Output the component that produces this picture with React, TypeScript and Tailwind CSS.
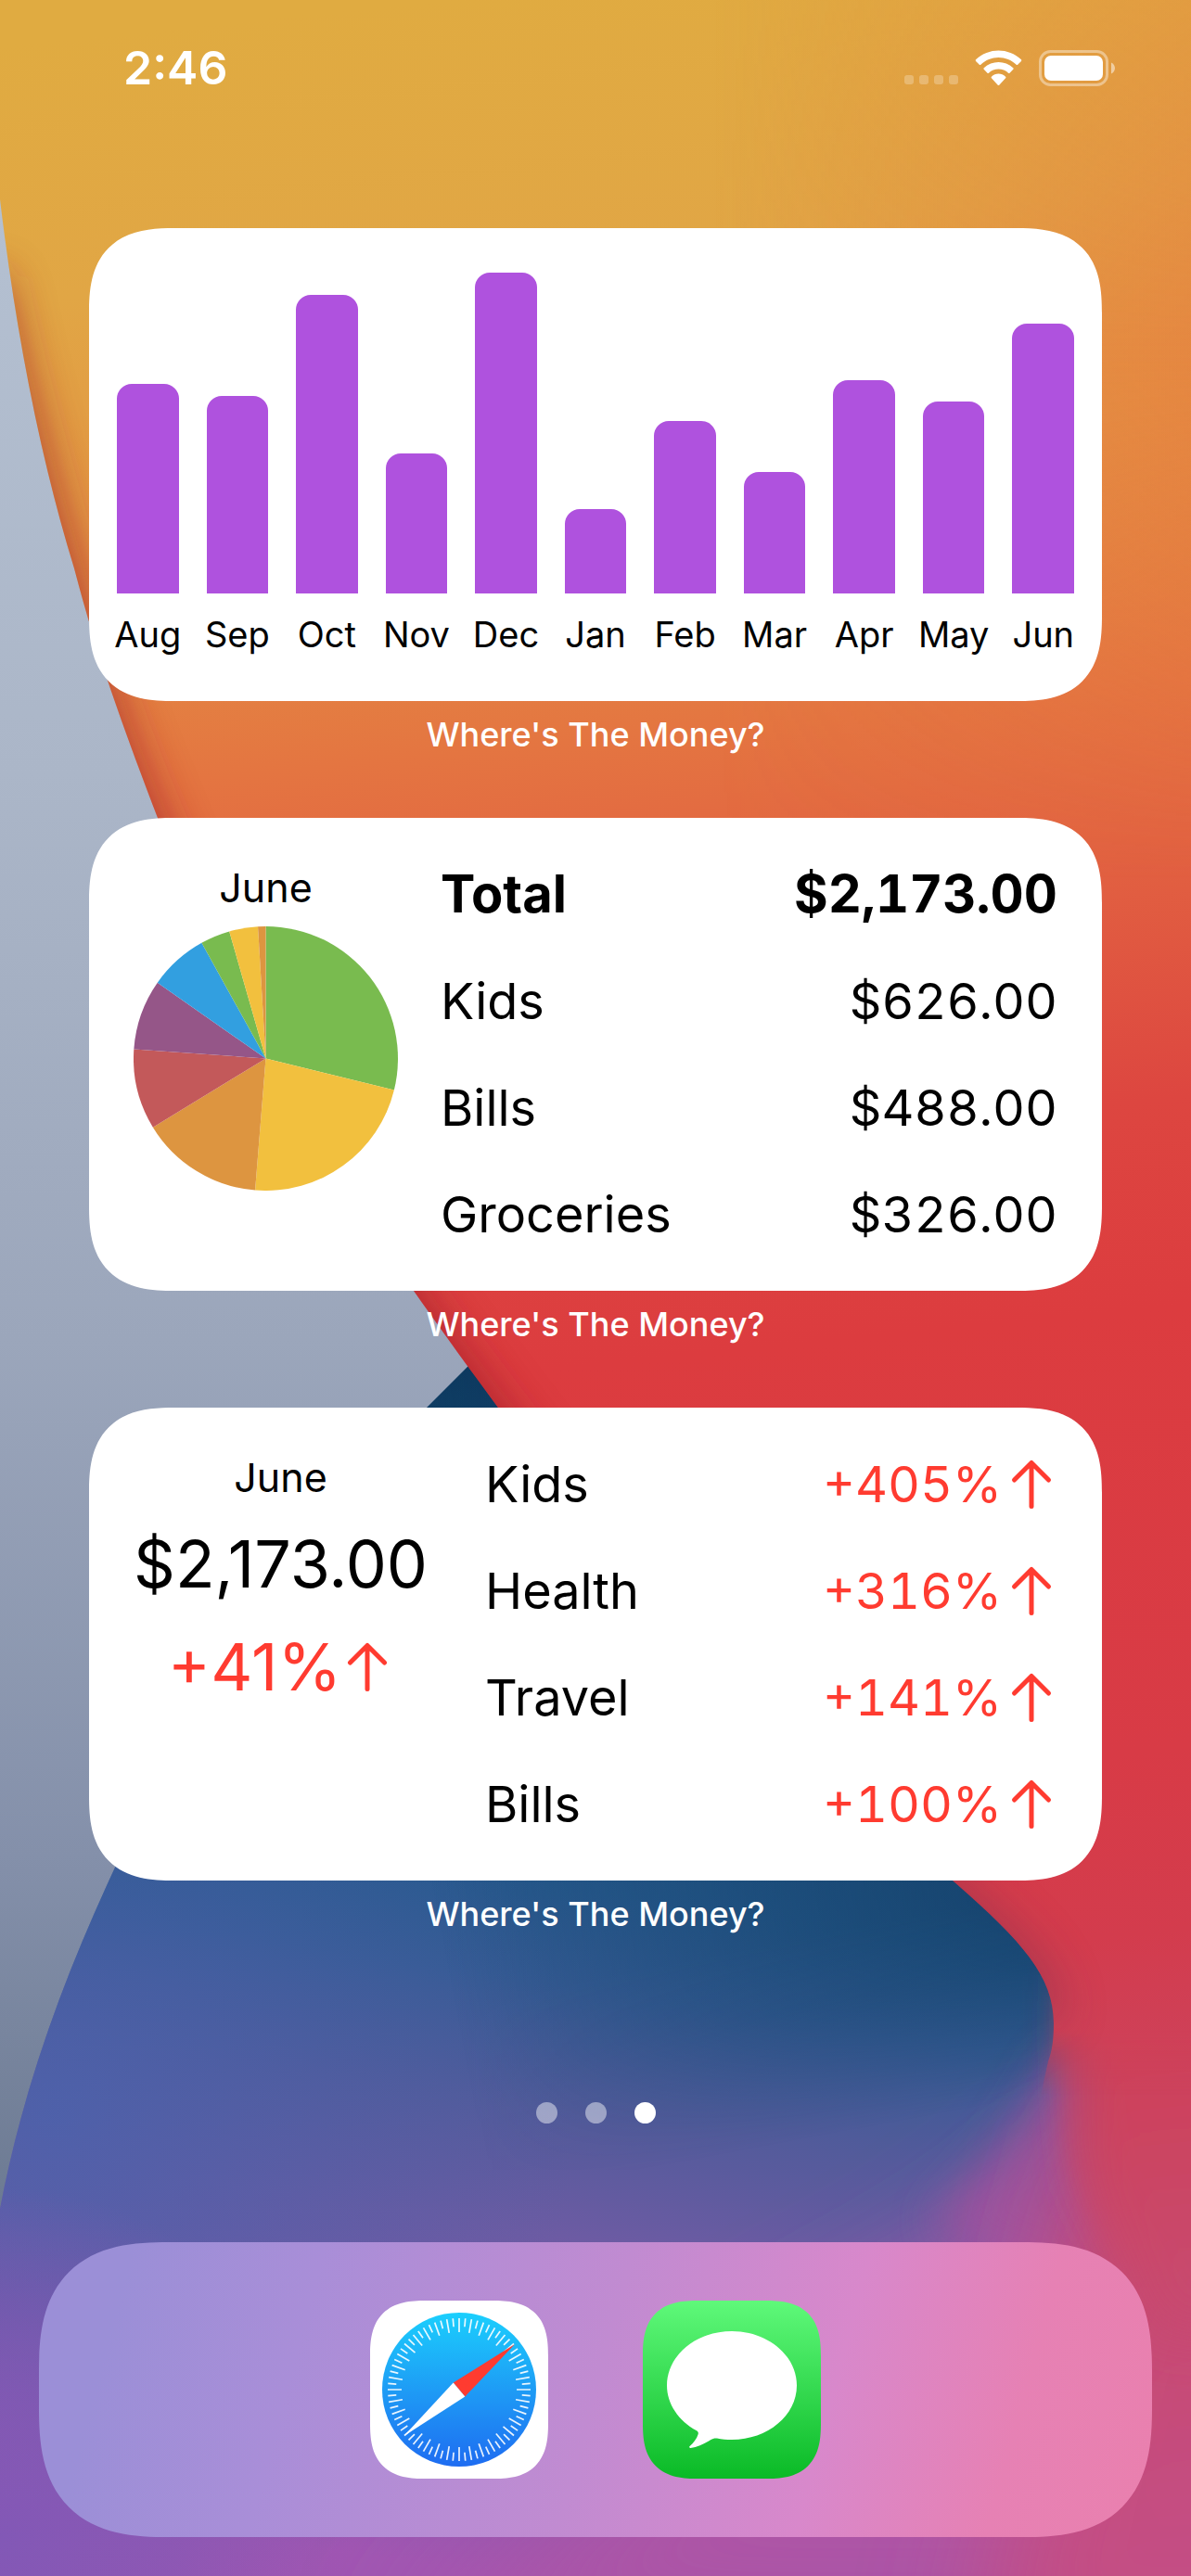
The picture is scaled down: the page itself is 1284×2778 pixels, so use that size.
const WIDGET_NAME = "Where's The Money?";

const MONTHS = [
  { label: "Aug", value: 226 },
  { label: "Sep", value: 213 },
  { label: "Oct", value: 322 },
  { label: "Nov", value: 151 },
  { label: "Dec", value: 346 },
  { label: "Jan", value: 91 },
  { label: "Feb", value: 186 },
  { label: "Mar", value: 131 },
  { label: "Apr", value: 230 },
  { label: "May", value: 207 },
  { label: "Jun", value: 291 },
];
const PEAK = 346;

const AMOUNTS = [
  { name: "Kids", amount: "$626.00" },
  { name: "Bills", amount: "$488.00" },
  { name: "Groceries", amount: "$326.00" },
];

const CHANGES = [
  { name: "Kids", change: "+405%" },
  { name: "Health", change: "+316%" },
  { name: "Travel", change: "+141%" },
  { name: "Bills", change: "+100%" },
];

// Each slice runs from the previous slice's end angle (degrees, clockwise from the top).
const SLICES = [
  { end: 103.8, color: "#79bb4f" },
  { end: 184.6, color: "#f2c03e" },
  { end: 238.6, color: "#dd9540" },
  { end: 274, color: "#c3595a" },
  { end: 305, color: "#955688" },
  { end: 331, color: "#329fe0" },
  { end: 344, color: "#79bb4f" },
  { end: 356.6, color: "#f2c03e" },
  { end: 360, color: "#dd9540" },
];

function polar(deg: number, r: number) {
  const a = ((deg - 90) * Math.PI) / 180;
  return `${(100 + r * Math.cos(a)).toFixed(2)} ${(100 + r * Math.sin(a)).toFixed(2)}`;
}

function Wallpaper() {
  return (
    <svg
      className="absolute inset-0 -z-10 size-full"
      viewBox="0 0 1284 2778"
      preserveAspectRatio="none"
      aria-hidden="true"
    >
      <defs>
        <linearGradient id="mist" x1="0" y1="0" x2="0" y2="1">
          <stop offset="0.08" stopColor="#b4c0d1" />
          <stop offset="0.3" stopColor="#abb6c8" />
          <stop offset="0.52" stopColor="#9ba6bb" />
          <stop offset="0.72" stopColor="#8490aa" />
          <stop offset="0.86" stopColor="#6c7a92" />
        </linearGradient>
        <linearGradient id="warm" gradientUnits="userSpaceOnUse" x1="480" y1="0" x2="760" y2="2778">
          <stop offset="0" stopColor="#e0ab41" />
          <stop offset="0.1" stopColor="#e1a645" />
          <stop offset="0.18" stopColor="#e39743" />
          <stop offset="0.29" stopColor="#e47541" />
          <stop offset="0.35" stopColor="#e26341" />
          <stop offset="0.45" stopColor="#dd4640" />
          <stop offset="0.53" stopColor="#dc3c3f" />
          <stop offset="0.7" stopColor="#d83b46" />
          <stop offset="0.77" stopColor="#d33c4d" />
          <stop offset="0.83" stopColor="#cd425c" />
          <stop offset="0.91" stopColor="#c8496f" />
          <stop offset="1" stopColor="#c44e84" />
        </linearGradient>
        <linearGradient id="rightGlow" x1="0" y1="0" x2="1" y2="0">
          <stop offset="0.6" stopColor="#e8753f" stopOpacity="0" />
          <stop offset="1" stopColor="#e8753f" stopOpacity="0.5" />
        </linearGradient>
        <linearGradient id="rightFade" x1="0" y1="0" x2="0" y2="1">
          <stop offset="0" stopColor="#fff" stopOpacity="0.5" />
          <stop offset="0.4" stopColor="#fff" />
          <stop offset="1" stopColor="#fff" stopOpacity="0" />
        </linearGradient>
        <mask id="rightMask">
          <rect width="1284" height="950" fill="url(#rightFade)" />
        </mask>
        <linearGradient id="cool" gradientUnits="userSpaceOnUse" x1="740" y1="1460" x2="540" y2="2778">
          <stop offset="0" stopColor="#0b3458" />
          <stop offset="0.2" stopColor="#144a75" />
          <stop offset="0.44" stopColor="#27598d" />
          <stop offset="0.52" stopColor="#365b94" />
          <stop offset="0.62" stopColor="#535b9b" />
          <stop offset="0.72" stopColor="#6c5ba3" />
          <stop offset="0.84" stopColor="#7d58aa" />
          <stop offset="1" stopColor="#a056b2" />
        </linearGradient>
        <radialGradient id="coolLeft" gradientUnits="userSpaceOnUse" cx="60" cy="2280" r="560">
          <stop offset="0" stopColor="#4962ac" stopOpacity="0.8" />
          <stop offset="0.5" stopColor="#4760a8" stopOpacity="0.4" />
          <stop offset="1" stopColor="#4560a5" stopOpacity="0" />
        </radialGradient>
        <radialGradient id="violetCorner" gradientUnits="userSpaceOnUse" cx="0" cy="2740" r="380">
          <stop offset="0" stopColor="#8258b6" />
          <stop offset="0.5" stopColor="#8658b6" stopOpacity="0.6" />
          <stop offset="1" stopColor="#9057b4" stopOpacity="0" />
        </radialGradient>
        <linearGradient id="navy" x1="0" y1="0.4" x2="1" y2="0.2">
          <stop offset="0" stopColor="#134169" stopOpacity="0" />
          <stop offset="0.4" stopColor="#134169" stopOpacity="0.45" />
          <stop offset="1" stopColor="#0f3a60" />
        </linearGradient>
        <linearGradient id="navyFade" gradientUnits="userSpaceOnUse" x1="760" y1="2110" x2="800" y2="2320">
          <stop offset="0" stopColor="#fff" />
          <stop offset="0.35" stopColor="#fff" stopOpacity="0.8" />
          <stop offset="1" stopColor="#fff" stopOpacity="0" />
        </linearGradient>
        <mask id="navyMask" maskUnits="userSpaceOnUse" x="0" y="1400" width="1284" height="1000">
          <rect y="1400" width="1284" height="1000" fill="url(#navyFade)" />
        </mask>
        <linearGradient id="warmFade" gradientUnits="userSpaceOnUse" x1="0" y1="2190" x2="0" y2="2260">
          <stop offset="0" stopColor="#fff" />
          <stop offset="1" stopColor="#fff" stopOpacity="0" />
        </linearGradient>
        <mask id="warmMask" maskUnits="userSpaceOnUse" x="0" y="0" width="1284" height="2778">
          <rect width="1284" height="2778" fill="url(#warmFade)" />
        </mask>
        <clipPath id="coolShape">
          <path d="M520 1458 L460 1518 C320 1660 200 1840 123 2016 C70 2130 25 2250 0 2382 V2778 H1284 V1458 Z" />
        </clipPath>
        <clipPath id="warmShape">
          <path d="M0 0 V215 C16 350 42 490 80 613 C100 690 125 765 170 882 C250 1080 340 1235 446 1392 C480 1440 505 1475 537 1518 C680 1715 860 1880 1027 2028 C1100 2092 1136 2130 1136 2182 C1136 2200 1134 2212 1130 2223 L1122 2260 H1284 V0 Z" />
        </clipPath>
        <filter id="blur24" filterUnits="userSpaceOnUse" x="-200" y="0" width="1800" height="3000">
          <feGaussianBlur stdDeviation="24" />
        </filter>
        <filter id="blur12" filterUnits="userSpaceOnUse" x="-200" y="0" width="1800" height="3000">
          <feGaussianBlur stdDeviation="12" />
        </filter>
        <filter id="blur60" filterUnits="userSpaceOnUse" x="-400" y="1400" width="2200" height="1900">
          <feGaussianBlur stdDeviation="60" />
        </filter>
      </defs>
      <rect width="1284" height="2778" fill="url(#mist)" />
      <g clipPath="url(#coolShape)">
        <rect y="1440" width="1284" height="1338" fill="url(#cool)" />
        <rect y="1440" width="1284" height="1338" fill="url(#coolLeft)" />
        <rect y="2300" width="500" height="478" fill="url(#violetCorner)" />
        <rect x="420" y="1440" width="864" height="900" fill="url(#navy)" mask="url(#navyMask)" />
        <path d="M1160 2330 C1100 2400 1000 2460 860 2530 L420 2860 H1500 V2330 Z" fill="#ad54a6" filter="url(#blur60)" />
        <path d="M1140 2215 C1110 2285 1060 2340 1000 2400 L1200 2480 V2215 Z" fill="#a9519f" opacity="0.7" filter="url(#blur24)" />
        <path d="M1190 2300 L1150 2450 L1040 2900 H1600 V2200 Z" fill="url(#warm)" filter="url(#blur60)" />
        <path
          d="M1146 2150 C1148 2220 1142 2270 1150 2330 L1200 2440 H1500 V2150 Z"
          fill="url(#warm)"
          filter="url(#blur12)"
          opacity="0.4"
        />
        <path d="M1158 2130 C1158 2230 1158 2290 1172 2360 L1250 2520 H1500 V2130 Z" fill="url(#warm)" filter="url(#blur24)" />
      </g>
      <g mask="url(#warmMask)">
        <g clipPath="url(#warmShape)">
          <rect width="1284" height="2300" fill="url(#warm)" />
          <rect width="1284" height="950" fill="url(#rightGlow)" mask="url(#rightMask)" />
          <path
            d="M-20 300 C0 400 30 510 62 620 C85 700 100 765 150 882 C230 1080 320 1235 426 1392 C480 1470 600 1630 700 1740"
            fill="none"
            stroke="#a3222c"
            strokeWidth="46"
            opacity="0.75"
            filter="url(#blur24)"
          />
          <path
            d="M980 2010 C1080 2090 1125 2130 1125 2180"
            fill="none"
            stroke="#7d3350"
            strokeWidth="40"
            opacity="0.5"
            filter="url(#blur24)"
          />
        </g>
      </g>
    </svg>
  );
}

function StatusBar() {
  return (
    <header className="flex h-[146px] items-center justify-between pl-[133px] pr-[81px]">
      <time className="text-[50px] font-semibold leading-none">2:46</time>
      <div className="flex items-end gap-[18px]">
        <svg className="h-[39px] w-[58px]" viewBox="0 0 58 39" fill="#fff" fillOpacity="0.25" role="img" aria-label="No signal">
          <rect x="0" y="27" width="10" height="10" rx="3" />
          <rect x="16" y="27" width="10" height="10" rx="3" />
          <rect x="32" y="27" width="10" height="10" rx="3" />
          <rect x="48" y="27" width="10" height="10" rx="3" />
        </svg>
        <svg className="h-[39px] w-[51px]" viewBox="2 1 47 37" fill="#fff" role="img" aria-label="Wi-Fi">
          <path d="M25.5 8.6c6.8 0 13.3 2.6 18.2 7.3.4.4 1 .4 1.400 0l3.600-3.600c.4-.4.4-1.100 0-1.500C35.700-1.600 15.300-1.600 2.300 10.800c-.4.4-.4 1.100 0 1.500l3.600 3.600c.4.4 1 .4 1.400 0C12.200 11.200 18.700 8.600 25.500 8.600z" />
          <path d="M25.5 20.500c3.700 0 7.300 1.400 10 3.900.4.4 1 .4 1.400 0l3.600-3.600c.4-.4.4-1.100 0-1.500-8.400-8-21.600-8-30 0-.4.4-.4 1.100 0 1.500l3.600 3.600c.4.4 1 .4 1.400 0 2.700-2.500 6.300-3.900 10-3.900z" />
          <path d="M18.300 28.200c4-3.900 10.400-3.900 14.400 0 .4.4.4 1.100 0 1.500l-6.500 7c-.4.4-1 .4-1.400 0l-6.500-7c-.4-.4-.4-1.100 0-1.500z" />
        </svg>
        <svg className="h-[39px] w-[83px]" viewBox="0 0 83 39" fill="none" role="img" aria-label="Battery full">
          <rect x="1.500" y="1.500" width="72" height="36" rx="11" stroke="#fff" strokeOpacity="0.4" strokeWidth="3" />
          <rect x="6" y="6" width="63" height="27" rx="7" fill="#fff" />
          <path d="M78 13.500c2.500 1.200 4 3.500 4 6s-1.500 4.800-4 6z" fill="#fff" fillOpacity="0.5" />
        </svg>
      </div>
    </header>
  );
}

function Widget({ children }: { children: React.ReactNode }) {
  return (
    <section aria-label={WIDGET_NAME} className="flex flex-col">
      <div className="min-h-[510px] rounded-[72px] bg-white text-black supports-[corner-shape:squircle]:rounded-[92px] supports-[corner-shape:squircle]:[corner-shape:superellipse(1.4)]">
        {children}
      </div>
      <p className="pb-[36px] pt-[12px] text-center text-[36px] font-medium leading-[48px] text-white">{WIDGET_NAME}</p>
    </section>
  );
}

function SpendingChart() {
  return (
    <ul className="flex gap-[30px] px-[30px] py-12" aria-label="Spending by month">
      {MONTHS.map((m) => (
        <li key={m.label} className="flex min-w-0 flex-1 flex-col items-center gap-5">
          <div className="flex h-[346px] w-full items-end">
            <div className="w-full rounded-t-2xl bg-[#af52de]" style={{ height: `${(m.value / PEAK) * 100}%` }} />
          </div>
          <span className="whitespace-nowrap text-[38px] leading-[48px]">{m.label}</span>
        </li>
      ))}
    </ul>
  );
}

function Pie() {
  return (
    <svg className="size-[285px]" viewBox="0 0 200 200" role="img" aria-label="June spending by category">
      {SLICES.map((s, i) => {
        const start = i === 0 ? 0 : SLICES[i - 1].end;
        return <path key={s.end} fill={s.color} d={`M100 100 L${polar(start, 100)} A100 100 0 0 1 ${polar(s.end, 100)} Z`} />;
      })}
    </svg>
  );
}

function UpArrow() {
  return (
    <svg
      className="size-[56px] shrink-0"
      viewBox="0 0 56 56"
      fill="none"
      stroke="currentColor"
      strokeWidth="5"
      strokeLinecap="round"
      strokeLinejoin="round"
      aria-hidden="true"
    >
      <path d="M28 51.500V4.500M9.500 23 28 4.500 46.500 23" />
    </svg>
  );
}

function MonthBreakdown() {
  return (
    <div className="flex gap-[46px] px-12 py-[25px]">
      <div className="flex flex-col items-center gap-4 pt-6">
        <h2 className="text-[43px] leading-[52px]">June</h2>
        <Pie />
      </div>
      <table className="flex-1 text-[54px] leading-[115px]">
        <tbody>
          <tr className="text-[56px]">
            <th scope="row" className="p-0 text-left font-bold">
              Total
            </th>
            <td className="p-0 text-right font-bold tabular-nums">$2,173.00</td>
          </tr>
          {AMOUNTS.map((row) => (
            <tr key={row.name}>
              <th scope="row" className="p-0 text-left font-normal">
                {row.name}
              </th>
              <td className="p-0 text-right tabular-nums">{row.amount}</td>
            </tr>
          ))}
        </tbody>
      </table>
    </div>
  );
}

function MonthChanges() {
  return (
    <div className="flex gap-[62px] px-12 py-[25px]">
      <div className="flex flex-col items-center gap-6 pt-6">
        <h2 className="text-[43px] leading-[52px]">June</h2>
        <p className="text-[70px] leading-[88px]">$2,173.00</p>
        <p className="flex items-center text-[70px] leading-[86px] text-[#ff3b30]">
          +41%
          <UpArrow />
        </p>
      </div>
      <table className="flex-1 text-[54px] leading-[115px]">
        <tbody>
          {CHANGES.map((row) => (
            <tr key={row.name}>
              <th scope="row" className="p-0 text-left font-normal">
                {row.name}
              </th>
              <td className="p-0 tabular-nums text-[#ff3b30]">
                <span className="flex items-center justify-end gap-1">
                  {row.change}
                  <UpArrow />
                </span>
              </td>
            </tr>
          ))}
        </tbody>
      </table>
    </div>
  );
}

function SafariIcon() {
  const ticks = Array.from({ length: 72 }, (_, i) => i);
  return (
    <svg className="size-full" viewBox="0 0 192 192" aria-hidden="true">
      <defs>
        <linearGradient id="compass" x1="0" y1="0" x2="0" y2="1">
          <stop offset="0" stopColor="#1bcffd" />
          <stop offset="0.5" stopColor="#1e9cf5" />
          <stop offset="1" stopColor="#1e6cf1" />
        </linearGradient>
      </defs>
      <rect width="192" height="192" fill="#fff" />
      <circle cx="96" cy="96" r="83" fill="url(#compass)" />
      {ticks.map((i) => (
        <line
          key={i}
          x1="96"
          y1="19"
          x2="96"
          y2={i % 2 === 0 ? 34 : 28}
          stroke="#fff"
          strokeWidth="1.7"
          strokeOpacity="0.9"
          transform={`rotate(${i * 5} 96 96)`}
        />
      ))}
      <path d="M156 47 L89.700 88.500 L102.300 103.500 Z" fill="#ff3b30" />
      <path d="M36.500 146 L89.700 88.500 L102.300 103.500 Z" fill="#fff" />
    </svg>
  );
}

function MessagesIcon() {
  return (
    <svg className="size-full" viewBox="0 0 192 192" aria-hidden="true">
      <defs>
        <linearGradient id="green" x1="0" y1="0" x2="0" y2="1">
          <stop offset="0" stopColor="#5ff97a" />
          <stop offset="1" stopColor="#0aba26" />
        </linearGradient>
      </defs>
      <rect width="192" height="192" fill="url(#green)" />
      <path
        fill="#fff"
        d="M96 33c38.700 0 70 26.200 70 58.500S134.700 150 96 150c-5.500 0-10.900-.5-16-1.500-2.500-.4-4.500.3-7 1.700-6.500 4-14 7.800-21.500 8.700-1.400.2-1.800-.9-.9-1.800 4-3.600 7.600-8.200 9-12.800.6-1.900 0-3-1.600-4C38.500 129.500 26 111.500 26 91.500 26 59.200 57.300 33 96 33z"
      />
    </svg>
  );
}

function AppButton({ label, children }: { label: string; children: React.ReactNode }) {
  return (
    <button
      type="button"
      aria-label={label}
      className="size-48 overflow-hidden rounded-[44px] supports-[corner-shape:squircle]:rounded-[60px] supports-[corner-shape:squircle]:[corner-shape:superellipse(1.4)]"
    >
      {children}
    </button>
  );
}

export default function App() {
  return (
    <main className="relative isolate flex min-h-screen flex-col overflow-hidden font-['Inter',sans-serif] text-white">
      <Wallpaper />
      <StatusBar />
      <div className="flex flex-col gap-[30px] px-24 pt-[100px]">
        <Widget>
          <SpendingChart />
        </Widget>
        <Widget>
          <MonthBreakdown />
        </Widget>
        <Widget>
          <MonthChanges />
        </Widget>
      </div>
      <nav aria-label="Pages" className="mt-auto flex justify-center gap-[30px] pb-32">
        <button type="button" aria-label="Page 1" className="size-[23px] rounded-full bg-white/45" />
        <button type="button" aria-label="Page 2" className="size-[23px] rounded-full bg-white/45" />
        <button type="button" aria-label="Page 3" aria-current="page" className="size-[23px] rounded-full bg-white" />
      </nav>
      <footer className="mx-[42px] mb-[42px] flex h-[318px] items-center justify-center gap-[102px] rounded-[110px] bg-[linear-gradient(105deg,#9b8fd7_8%,#a98ed8_24%,#c18bd1_50%,#d888cb_70%,#e681b4_86%,#ea80ae_100%)] supports-[corner-shape:squircle]:rounded-[140px] supports-[corner-shape:squircle]:[corner-shape:superellipse(1.4)]">
        <AppButton label="Safari">
          <SafariIcon />
        </AppButton>
        <AppButton label="Messages">
          <MessagesIcon />
        </AppButton>
      </footer>
    </main>
  );
}
